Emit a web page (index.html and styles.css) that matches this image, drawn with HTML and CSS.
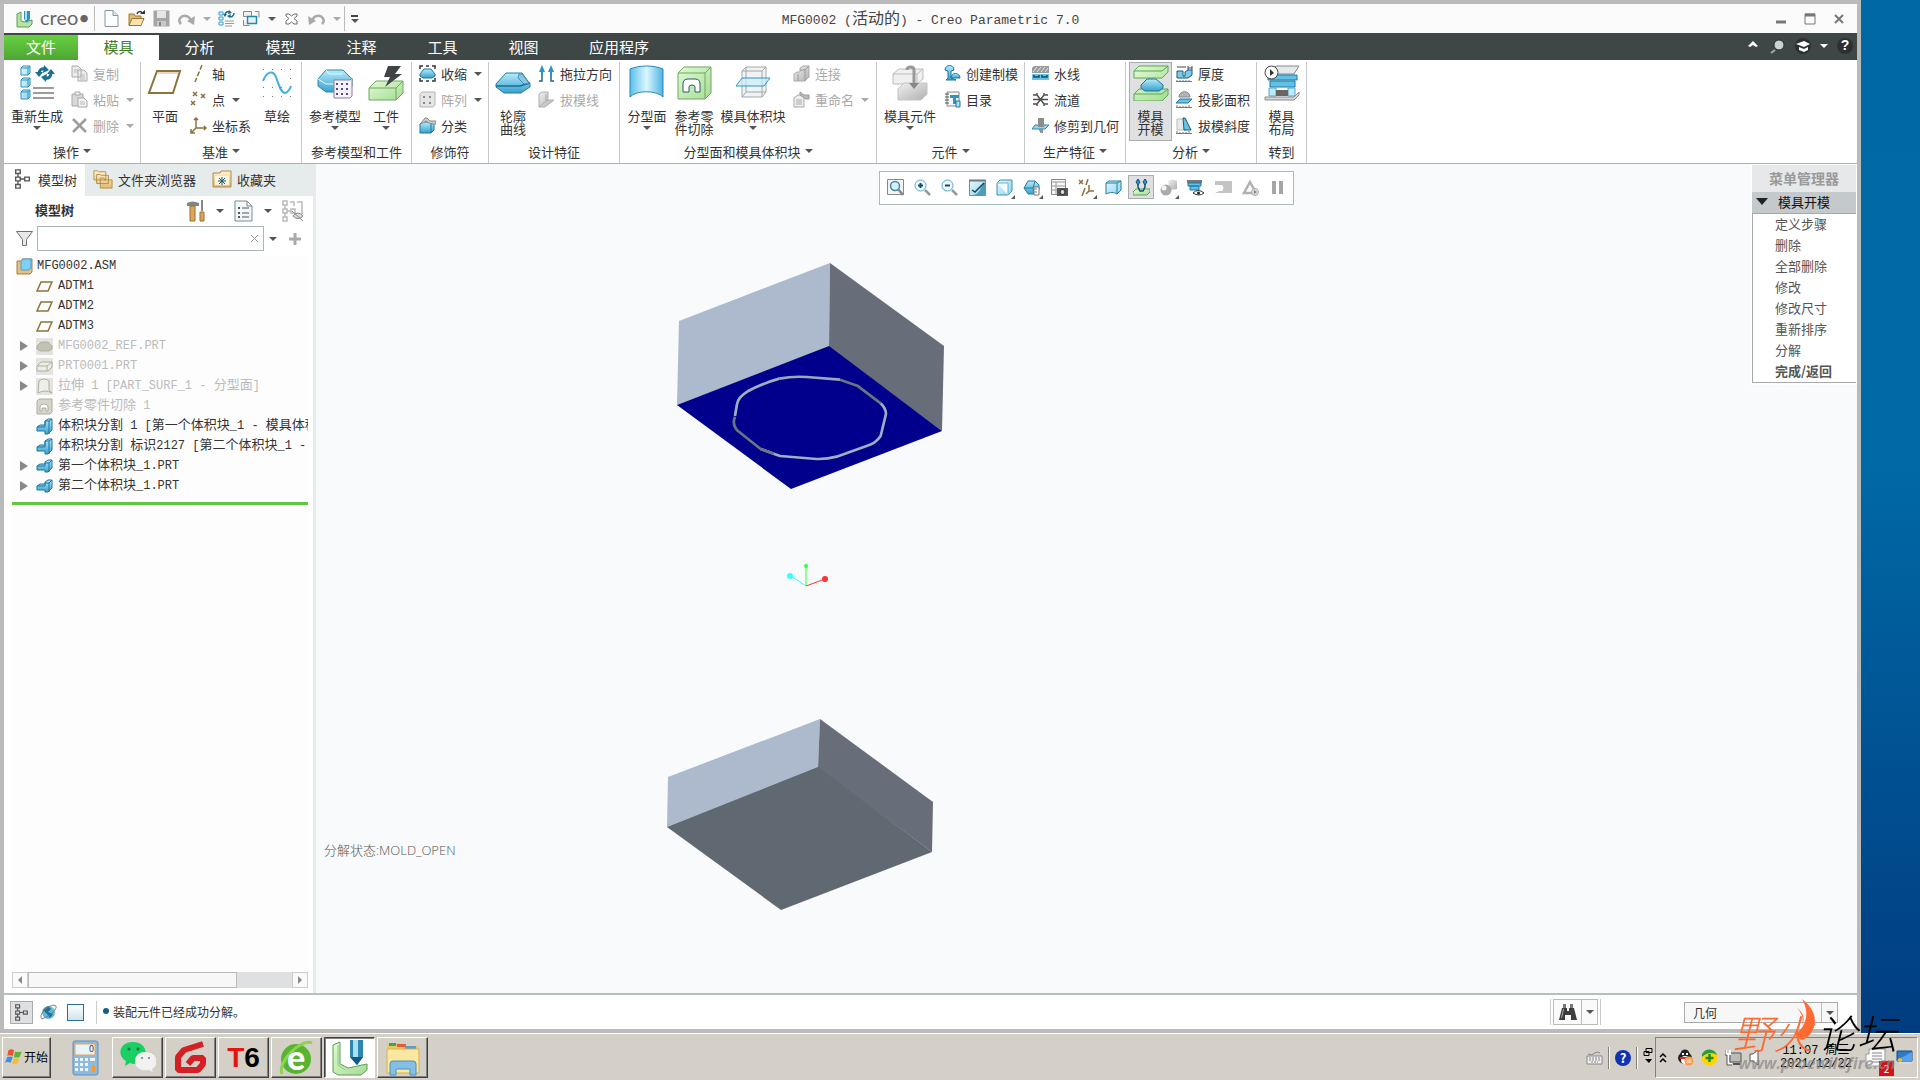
FILE: index.html
```
<!DOCTYPE html>
<html lang="zh-CN">
<head>
  <meta charset="UTF-8">
  <meta name="viewport" content="width=device-width, initial-scale=1.0">
  <title>MFG0002 (活动的) - Creo Parametric 7.0</title>
  <link rel="stylesheet" href="styles.css">
</head>
<body>
<!-- Icon sprite -->
<svg class="sprite" aria-hidden="true">
  <defs>
    <linearGradient id="gBlue" x1="0" y1="0" x2="0" y2="1"><stop offset="0" stop-color="#b4ecfb"/><stop offset="1" stop-color="#3aa0cc"/></linearGradient>
    <linearGradient id="gPale" x1="0" y1="0" x2="1" y2="1"><stop offset="0" stop-color="#e4f8ff"/><stop offset="1" stop-color="#8fd3ee"/></linearGradient>
    <linearGradient id="gSurf" x1="0" y1="0" x2="1" y2="0"><stop offset="0" stop-color="#5bbfea"/><stop offset=".5" stop-color="#dcf6ff"/><stop offset="1" stop-color="#4db4e4"/></linearGradient>
    <linearGradient id="gGreen" x1="0" y1="0" x2="1" y2="1"><stop offset="0" stop-color="#e0fbd4"/><stop offset="1" stop-color="#a6dc94"/></linearGradient>
    <linearGradient id="gGray" x1="0" y1="0" x2="1" y2="1"><stop offset="0" stop-color="#f0f0f0"/><stop offset="1" stop-color="#b0b0b0"/></linearGradient>
    <linearGradient id="gFold" x1="0" y1="0" x2="0" y2="1"><stop offset="0" stop-color="#fff3cf"/><stop offset="1" stop-color="#e3bb76"/></linearGradient>
  </defs>

  <!-- quick access -->
  <symbol id="i-logo" viewBox="0 0 18 18"><path d="M1 4l4-2v9l3 1 8-2v4l-3 3H1z" fill="#b9e2a4" stroke="#5f9d55"/><path d="M8 1h6v8l-3 4-3-4z" fill="#2f93c2"/><path d="M9 1h2v9H9z" fill="#a5e1f7"/></symbol>
  <symbol id="i-new" viewBox="0 0 17 17"><path d="M2 .5h8l5 5v11H2z" fill="#fdfeff" stroke="#8a969e"/><path d="M10 .5v5h5" fill="#d4e4ee" stroke="#8a969e"/></symbol>
  <symbol id="i-open" viewBox="0 0 17 17"><path d="M1 15V4h5l1 2h6v3" fill="#e8b968" stroke="#99743a"/><path d="M1 15.500l3-7h12l-3 7z" fill="#fbe3ac" stroke="#99743a"/><path d="M9 4c1-3 4-3 5-1" fill="none" stroke="#333" stroke-width="1.500"/><path d="M12 4h5V0z" fill="#333"/></symbol>
  <symbol id="i-save" viewBox="0 0 17 17"><path d="M.5.500h16v16H.5z" fill="#a5a5a5"/><path d="M4 1h9v7H4z" fill="#e6e6e6"/><path d="M4 11h9v5H4z" fill="#c9c9c9"/><path d="M6 12h2v4H6z" fill="#888"/></symbol>
  <symbol id="i-redo" viewBox="0 0 17 17"><path d="M3 14c-4-4 0-9 5-8 3 0 4 3 5 4" fill="none" stroke="#a9a9a9" stroke-width="2.500"/><path d="M17 6l-1 9-7-4z" fill="#a9a9a9"/></symbol>
  <symbol id="i-undo" viewBox="0 0 17 17"><path d="M14 14c4-4 0-9-5-8-3 0-4 3-5 4" fill="none" stroke="#a9a9a9" stroke-width="2.500"/><path d="M0 6l1 9 7-4z" fill="#a9a9a9"/></symbol>
  <symbol id="i-regen" viewBox="0 0 17 17"><path d="M1 2h4v3H1zM1 7h4v3H1zM1 12h4v3H1z" fill="#dff5ff" stroke="#3c9dc9"/><path d="M7 5c0-3 3-4 5-3M16 3c0 3-3 5-5 3" fill="none" stroke="#176d90" stroke-width="1.500"/><path d="M11 0l3 3-4 1zM12 8L9 6l4-2zM5 4h4L7 7z" fill="#176d90"/><path d="M7 11h9M7 13.500h9M7 16h7" stroke="#9a9a9a"/></symbol>
  <symbol id="i-wins" viewBox="0 0 17 17"><path d="M.5 1.500h8v5h-8zM12 1.500h4v6M.5 10v5.500h6" fill="#eee" stroke="#8c8c8c"/><path d="M4.500 6.500h9v7h-9z" fill="#dff3fb" stroke="#2a86a8" stroke-width="1.500"/></symbol>
  <symbol id="i-closewin" viewBox="0 0 17 17"><path d="M3 4h3l2.500 2L11 4h3v2l-3 2.500 3 2.500v3h-3l-2.500-2L6 14H3v-3l3-2.500L3 6z" fill="#fff" stroke="#6d6d6d"/></symbol>

  <!-- ribbon large -->
  <symbol id="b-regen" viewBox="0 0 36 36"><g fill="url(#gPale)" stroke="#2d93c0"><path d="M2 3l2-2h7v7l-2 2H2zM2 15l2-2h7v7l-2 2H2zM2 27l2-2h7v7l-2 2H2z"/><path d="M2 3h7v7M9 3l2-2M2 15h7v7M9 15l2-2M2 27h7v7M9 27l2-2" fill="none"/></g><path d="M20 8q1-5 6-4M32 9q-1 5-6 4" fill="none" stroke="#1a6f94" stroke-width="3"/><path d="M25 0l5 5-6 3zM27 17l-5-5 6-3zM16 7h8l-4 5zM28 9h8l-4-5z" fill="#1a6f94"/><path d="M14 23h21M14 28h21M14 33h21" stroke="#9c9c9c" stroke-width="2"/></symbol>
  <symbol id="b-plane" viewBox="0 0 36 36"><path d="M10 6h23l-7 22H2z" fill="none" stroke="#8e713c" stroke-width="2"/><path d="M11 8h20" stroke="#c9b284"/></symbol>
  <symbol id="b-sketch" viewBox="0 0 36 36"><g fill="#777"><path d="M4 4h1v1H4zM13 4h1v1h-1zM22 4h1v1h-1zM31 4h1v1h-1zM4 13h1v1H4zM31 13h1v1h-1zM4 22h1v1H4zM13 22h1v1h-1zM22 22h1v1h-1zM31 22h1v1h-1zM4 31h1v1H4zM13 31h1v1h-1zM22 31h1v1h-1zM31 31h1v1h-1z"/></g><path d="M4 16C8 6 14 5 17 12c3 8 5 16 9 16 4-1 5-4 6-7" fill="none" stroke="#43aee0" stroke-width="2"/></symbol>
  <symbol id="b-refmodel" viewBox="0 0 36 36"><path d="M1 14L9 5h17l9 9v7l-5 6H9l-8-6z" fill="url(#gBlue)" stroke="#2988b0"/><path d="M1 14l8 5h18l8-5M9 5l3 4h14" fill="none" stroke="#e3faff"/><path d="M17 15h16l2-2v18l-2 2H17z" fill="#f5f2fa" stroke="#87809d"/><g fill="#5a4a86"><path d="M19 18h2v2h-2zM24 18h2v2h-2zM29 18h2v2h-2zM19 23h2v2h-2zM24 23h2v2h-2zM29 23h2v2h-2zM19 28h2v2h-2zM24 28h2v2h-2zM29 28h2v2h-2z"/></g></symbol>
  <symbol id="b-work" viewBox="0 0 36 36"><path d="M1 23l7-7h27v12l-7 7H1z" fill="url(#gGreen)" stroke="#6ea860"/><path d="M1 23h27v12M28 23l7-7" fill="none" stroke="#6ea860"/><path d="M20 1h13l-6 8h7L17 22l5-10h-6z" fill="#404448"/></symbol>
  <symbol id="b-lens" viewBox="0 0 36 36"><path d="M1 19L11 8h16l8 11v3l-9 6H9l-8-6z" fill="url(#gBlue)" stroke="#247da6"/><path d="M1 21h24l10-3" fill="none" stroke="#176d96" stroke-width="1.500"/><path d="M24 9h3l7 9-5 1-6-6z" fill="#8cc6e0" stroke="#3f93b8"/></symbol>
  <symbol id="b-surf" viewBox="0 0 36 36"><path d="M1 4c9-4 24-4 33 0v28c-6-7-27-7-33 0z" fill="url(#gSurf)" stroke="#2d86b4"/></symbol>
  <symbol id="b-refcut" viewBox="0 0 36 36"><path d="M2 8l6-6h27v26l-6 6H2z" fill="url(#gGreen)" stroke="#6ea860"/><path d="M2 8h27v26M29 8l6-6" fill="none" stroke="#6ea860"/><path d="M7 27v-8q0-5 5-5h7q5 0 5 5v8h-5v-5q0-2-3-2t-3 2v5z" fill="#fff" stroke="#285a72"/></symbol>
  <symbol id="b-volume" viewBox="0 0 36 36"><path d="M7 6l4-4h20v25l-4 5H7z" fill="#f1f2f3" stroke="#a3a8ac"/><path d="M7 6h20v26M27 6l4-4M11 2v25h20M7 32l4-5" fill="none" stroke="#a3a8ac"/><path d="M7 13h28l-6 8H1z" fill="#c7ecfa" fill-opacity=".6" stroke="#2e92c4"/></symbol>
  <symbol id="b-moldcomp" viewBox="0 0 36 36"><path d="M1 9l6-5h24v10l-6 5H1zM1 9h24v10M25 9l6-5" fill="#f0f0f0" stroke="#bbb"/><path d="M6 24l6-6h23v11l-6 6H6z" fill="url(#gGray)" stroke="#c5c5c5"/><path d="M15 5c0-4 7-4 7 0v14" fill="none" stroke="#999" stroke-width="3"/><path d="M17 18h10l-5 6z" fill="#888"/></symbol>
  <symbol id="b-open" viewBox="0 0 36 36"><g fill="url(#gGreen)" stroke="#5da653"><path d="M1 6l5-5h29v6l-6 6H1zM1 29l5-5h29v6l-6 6H1z"/><path d="M1 6h28l6-5M1 29h28l6-5" fill="none"/></g><path d="M8 20l6-6h9l7 6v3l-4 3H12l-4-3z" fill="url(#gBlue)" stroke="#1c76a3"/></symbol>
  <symbol id="b-layout" viewBox="0 0 36 36"><path d="M8 5l4-4h23l-5 8H8z" fill="#e6e8ea" stroke="#85898c"/><path d="M4 10h29v5H4zM6 16h25v6H6z" fill="#5fc2e6" stroke="#1d7ba6"/><path d="M5 23h7v8H5zM24 23h7v8h-7z" fill="#bdeafa" stroke="#58a6c6"/><path d="M12 25h12v6H12z" fill="#666"/><path d="M1 32h29l5-5v3l-5 5H1z" fill="#d4d6d8" stroke="#8b8f92"/><circle cx="7.500" cy="7.500" r="6.500" fill="#fff" stroke="#444"/><path d="M6 4v7l4-3z" fill="#333"/></symbol>

  <!-- ribbon small -->
  <symbol id="s-copy" viewBox="0 0 17 17"><path d="M1 1h6l3 3v8H1zM7 5h6l3 3v8H7z" fill="#ececec" stroke="#aaa"/><path d="M3 5h4M3 7h4M9 10h5M9 12h5M9 14h5" stroke="#bbb"/></symbol>
  <symbol id="s-paste" viewBox="0 0 17 17"><path d="M1 3h11v12H1z" fill="#d8d8d8" stroke="#aaa"/><path d="M4 1h5v3H4z" fill="#eee" stroke="#aaa"/><path d="M7 7h6l3 3v6H7z" fill="#f2f2f2" stroke="#aaa"/><path d="M9 11h5M9 13h5" stroke="#bbb"/></symbol>
  <symbol id="s-del" viewBox="0 0 17 17"><path d="M2 2l13 13M15 2L2 15" stroke="#9c9c9c" stroke-width="2.500"/></symbol>
  <symbol id="s-axis" viewBox="0 0 17 17"><path d="M12 0L5 17" stroke="#8e713c" stroke-width="1.500" stroke-dasharray="5 2"/></symbol>
  <symbol id="s-point" viewBox="0 0 17 17"><path d="M3 1l4 4m0-4L3 5M11 3l4 4m0-4l-4 4M1 10l4 4m0-4l-4 4" stroke="#8e713c" stroke-width="1.500"/></symbol>
  <symbol id="s-csys" viewBox="0 0 17 17"><path d="M6 1v10h10M6 11l-5 5M4 3l2-2 2 2M14 9l2 2-2 2M1 12v4h4" fill="none" stroke="#8e713c" stroke-width="1.500"/></symbol>
  <symbol id="s-shrink" viewBox="0 0 17 17"><path d="M1 9l4-5h7l4 5v2l-3 2H4l-3-2z" fill="url(#gBlue)" stroke="#1c76a3"/><path d="M1 4V1h3M13 1h3v3M1 13v3h3M16 13v3h-3M7 1h3M7 16h3" fill="none" stroke="#333" stroke-width="1.500"/></symbol>
  <symbol id="s-pattern" viewBox="0 0 17 17"><path d="M1 3l2-2h13v13l-2 2H1z" fill="#e5e5e5" stroke="#b5b5b5"/><path d="M4 5h2v2H4zM10 5h2v2h-2zM4 11h2v2H4zM10 11h2v2h-2z" fill="#888"/></symbol>
  <symbol id="s-class" viewBox="0 0 17 17"><path d="M1 7l3-2h11v8l-3 3H1z" fill="url(#gBlue)" stroke="#1c76a3"/><path d="M12 7v9M12 7l3-2" stroke="#1c76a3"/><path d="M2 6l4-5h2l3 3h6v3h-3l-4-1-3-2-3 2z" fill="#ccc" stroke="#8c8c8c"/></symbol>
  <symbol id="s-pull" viewBox="0 0 17 17"><path d="M1 16h3V6M16 16h-3V6" fill="none" stroke="#23658a" stroke-width="1.500"/><path d="M1 7l3-7 3 7zM10 7l3-7 3 7z" fill="#2d93c8"/><path d="M3 6h2v5H3zM12 6h2v5h-2z" fill="#2d93c8"/></symbol>
  <symbol id="s-draft" viewBox="0 0 17 17"><path d="M1 3l3-2h6v8h6l-9 7H1z" fill="url(#gGray)" stroke="#b0b0b0"/><path d="M8 3v7l-7 6M10 9l-2 1" fill="none" stroke="#aaa"/></symbol>
  <symbol id="s-conn" viewBox="0 0 17 17"><path d="M1 9l3-2h3V3l3-2h6v11l-4 4H1z" fill="url(#gGray)" stroke="#aaa"/><path d="M7 5h5v11M12 5l4-4M5 9v7" fill="none" stroke="#999"/></symbol>
  <symbol id="s-rename" viewBox="0 0 17 17"><path d="M1 7l4-3h6v12H1z" fill="#eee" stroke="#aaa"/><path d="M3 9h6M3 11h6M3 13h6" stroke="#aaa"/><path d="M7 1l4 3h5v4h-3l-6-4z" fill="#bbb" stroke="#999"/></symbol>
  <symbol id="s-mold" viewBox="0 0 17 17"><path d="M1 5c0-6 9-6 9 0l-3 1v7l5 2H2l2-2V6z" fill="url(#gBlue)" stroke="#1c76a3"/><path d="M7 13c0-6 9-6 9 0z" fill="url(#gBlue)" stroke="#1c76a3"/></symbol>
  <symbol id="s-catalog" viewBox="0 0 17 17"><path d="M3 1h12v14H3z" fill="#f4f6f7" stroke="#888"/><path d="M1 3h4M1 6h4M1 9h4M1 12h4" stroke="#555"/><path d="M6 4h9v3h-3v6H9V7H6z" fill="#2d93c8"/><path d="M12 10h4v6h-4z" fill="#a8e0f5" stroke="#1c76a3"/></symbol>
  <symbol id="s-water" viewBox="0 0 17 17"><path d="M0 3l2-2h15v7H0z" fill="#9a9a9a"/><path d="M1 7l4-5M5 7l4-5M9 7l4-5M13 7l3-4" stroke="#e8e8e8"/><path d="M0 9h17v6H0z" fill="#69c1e4"/><path d="M2 10v2h5v-2M10 10v2h5v-2" fill="none" stroke="#0d4f6e" stroke-width="1.500"/></symbol>
  <symbol id="s-runner" viewBox="0 0 17 17"><path d="M1 4h4l7 9h4M1 13h4l7-9h4M5 2v2M12 2v2M5 15v-2M12 15v-2M1 8.500h15" fill="none" stroke="#505050" stroke-width="1.500"/></symbol>
  <symbol id="s-trim" viewBox="0 0 17 17"><path d="M3 8h14l-4 4H0z" fill="#8ed6f1" stroke="#2988b0"/><path d="M6 1h6v9H6z" fill="#8c8c8c"/><path d="M7 13h4M8 15h3" stroke="#777" stroke-width="1.500"/></symbol>
  <symbol id="s-thick" viewBox="0 0 17 17"><path d="M1 6h6v5h2V7l3-2h4v5l-4 3H1z" fill="#7fcbe9" stroke="#1a5c7c"/><path d="M12 1v4M16 1v4M12 3h4M1 2h9" fill="none" stroke="#444"/><path d="M0 16.500h16M1 15v1M4 15v1M7 15v1M10 15v1M13 15v1" stroke="#777"/></symbol>
  <symbol id="s-proj" viewBox="0 0 17 17"><path d="M3 6c0-7 11-7 11 0z" fill="#b5b5b5" stroke="#888"/><path d="M4 8h12l-4 4H0z" fill="#69c1e4" stroke="#1c76a3"/><path d="M0 16.500h16M1 14v2M4 15v1M7 15v1M10 15v1M13 14v2" stroke="#777"/></symbol>
  <symbol id="s-slope" viewBox="0 0 17 17"><path d="M1 2h9v11H1z" fill="#eaeaea" stroke="#bbb"/><path d="M7 1h2l6 12H8z" fill="#69c1e4" stroke="#1a5c7c"/><path d="M0 16.500h16M1 14v2M4 15v1M7 15v1M10 15v1M13 14v2" stroke="#777"/></symbol>

  <!-- graphics toolbar -->
  <symbol id="v-refit" viewBox="0 0 17 17"><path d="M.5.500h16v15H.5z" fill="#f4f4f4" stroke="#888"/><circle cx="8" cy="7" r="4.500" fill="#d3f0fb" stroke="#3c8aae" stroke-width="1.500"/><path d="M11 10l5 6" stroke="#888" stroke-width="2.500"/></symbol>
  <symbol id="v-zin" viewBox="0 0 17 17"><circle cx="6.500" cy="6.500" r="5.500" fill="#eefaff" stroke="#5aa6c6"/><path d="M6.500 4v5M4 6.500h5" stroke="#134f70" stroke-width="2"/><path d="M11 11l5 5" stroke="#999" stroke-width="2.500"/></symbol>
  <symbol id="v-zout" viewBox="0 0 17 17"><circle cx="6.500" cy="6.500" r="5.500" fill="#eefaff" stroke="#5aa6c6"/><path d="M4 6.500h5" stroke="#134f70" stroke-width="2"/><path d="M11 11l5 5" stroke="#999" stroke-width="2.500"/></symbol>
  <symbol id="v-repaint" viewBox="0 0 17 17"><path d="M.5 1.500h16v15H.5z" fill="url(#gPale)" stroke="#7b8b93"/><path d="M16 3v13H3c8 0 8-8 13-13z" fill="#4a9dbf"/><path d="M0 1.500h17" stroke="#777" stroke-width="2"/><path d="M3 11l3 2 9-9" fill="none" stroke="#14435c" stroke-width="1.500"/></symbol>
  <symbol id="v-shade" viewBox="0 0 17 17"><path d="M1 4l3-3h12v11l-4 4H1z" fill="url(#gPale)" stroke="#3f8fb2"/><path d="M1 4h11v12" fill="#f4fcff" stroke="#68b5d6"/></symbol>
  <symbol id="v-views" viewBox="0 0 17 17"><path d="M1 9l4-7h7l4 4v5l-5 4H5z" fill="url(#gBlue)" stroke="#247da6"/><path d="M1 9h9l2-7M10 9l1 6" fill="none" stroke="#247da6"/><path d="M11 8h5v8h-5z" fill="#fff" stroke="#777"/><path d="M12 10h2M12 13h2" stroke="#777"/></symbol>
  <symbol id="v-snap" viewBox="0 0 17 17"><path d="M.5.500h14v15H.5z" fill="#f7f7f7" stroke="#888"/><path d="M0 3h15M0 7h15M0 11h15M5 3v12" stroke="#999"/><path d="M6 9h11v8H6z" fill="#555"/><circle cx="11.500" cy="13" r="2.500" fill="#ddd" stroke="#222"/></symbol>
  <symbol id="v-datum" viewBox="0 0 17 17"><path d="M1 1l4 4m0-4L1 5M10 0L8 6M7 9l-3 8M11 6v6h5M11 12l-3 3" fill="none" stroke="#8e713c" stroke-width="1.500"/></symbol>
  <symbol id="v-anno" viewBox="0 0 17 17"><path d="M1 4l3-2h12v9l-4 4c-3-2-7-2-11 0z" fill="url(#gPale)" stroke="#247da6"/><path d="M1 4h11v11M12 4l4-2" fill="none" stroke="#247da6"/></symbol>
  <symbol id="v-explode" viewBox="0 0 17 17"><path d="M0 13l3-3h14v3l-3 3H0z" fill="url(#gGreen)" stroke="#5da653"/><path d="M5 5v3l2 4h3l2-4V5" fill="none" stroke="#134f70" stroke-width="1.500"/><path d="M5 0l2 3-2 3-2-3zM12 0l2 3-2 3-2-3z" fill="#2d93c8" stroke="#134f70"/></symbol>
  <symbol id="v-spin" viewBox="0 0 17 17"><path d="M8 2q4-3 9 0v8l-7 1z" fill="url(#gGray)"/><circle cx="6" cy="11" r="5.500" fill="#aaa"/><circle cx="4" cy="9" r="2.500" fill="#f5f5f5"/></symbol>
  <symbol id="v-perspective" viewBox="0 0 17 17"><path d="M0 1h15v3H0z" fill="#777"/><path d="M1 4h13v3H1zM3 7h9v4H3z" fill="#5fc2e6" stroke="#1d7ba6"/><path d="M6 14q5-5 11 0-5 4-11 0z" fill="#fff" stroke="#333"/><circle cx="11.500" cy="14" r="1.500" fill="#222"/></symbol>
  <symbol id="v-stop" viewBox="0 0 17 17"><path d="M0 2h17v12H0l4-2h3q3-3 0-6H0z" fill="#c4c4c4"/></symbol>
  <symbol id="v-tri" viewBox="0 0 17 17"><path d="M8 3l6 11H2z" fill="none" stroke="#b0b0b0" stroke-width="2.500"/><circle cx="13" cy="13" r="3.500" fill="#ddd" stroke="#aaa"/><path d="M12 11v4l3-2z" fill="#888"/></symbol>
  <symbol id="v-pause" viewBox="0 0 17 17"><path d="M3 2h4v13H3zM10 2h4v13h-4z" fill="#a5a5a5"/></symbol>

  <!-- model tree -->
  <symbol id="t-tree" viewBox="0 0 17 22"><path d="M1 1h5v4H1zM1 9h5v4H1zM1 17h5v4H1zM11 9h5v4h-5zM3.500 5v4M3.500 13v4M6 11h5" fill="none" stroke="#555" stroke-width="1.500"/></symbol>
  <symbol id="t-folders" viewBox="0 0 22 22"><g fill="url(#gFold)" stroke="#b38a45"><path d="M1 2h4l1 1h8v9H1zM4 6h4l1 1h8v9H4zM8 10h4l1 2h8v9H8z"/></g></symbol>
  <symbol id="t-fav" viewBox="0 0 20 20"><path d="M1 4h7l1-2h10v16H1z" fill="url(#gFold)" stroke="#b38a45"/><path d="M3 7h14v9H3z" fill="#fcf3dc"/><path d="M10 8v8M6 12h8M7 9l6 6M13 9l-6 6" stroke="#17597c"/></symbol>
  <symbol id="t-tools" viewBox="0 0 20 22"><path d="M1 3q5-3 12 0v3H1z" fill="#7f8487"/><path d="M4 6h5v15H4z" fill="#dca75c" stroke="#9c6f2f"/><path d="M15 0h2v11h-2z" fill="#888"/><path d="M14 12h4v9h-4z" fill="#dca75c" stroke="#9c6f2f"/></symbol>
  <symbol id="t-list" viewBox="0 0 20 22"><path d="M1 1h12l5 5v15H1z" fill="#f2f7fa" stroke="#7d8a91"/><path d="M13 1v5h5" fill="none" stroke="#7d8a91"/><path d="M8 8h7M8 13h7M8 17h7" stroke="#555"/><path d="M4 7h2v2H4zM4 12h2v2H4zM4 16h2v2H4z" fill="#555"/></symbol>
  <symbol id="t-hide" viewBox="0 0 22 22"><path d="M1 1h4v4H1zM1 9h4v4H1zM1 17h4v4H1zM9 9h4v4H9zM3 5v4M3 13v4M5 11h4M8 2h4v4M15 2h5v12" fill="none" stroke="#bbb" stroke-width="1.500"/><path d="M11 16q5-6 10 0-5 5-10 0zM10 11l11 10" fill="#ddd" stroke="#888"/></symbol>
  <symbol id="t-funnel" viewBox="0 0 17 17"><path d="M.5 1.500h16l-6 8v6h-4v-6z" fill="#e9e9e9" stroke="#707070"/></symbol>
  <symbol id="t-asm" viewBox="0 0 17 17"><path d="M1 3h5V1h10v13l-2 2H1z" fill="#e4c084" stroke="#a57d3e"/><path d="M5 3l2-2h8v9l-3 2H5z" fill="#7fd0f2" stroke="#4aa3c8"/></symbol>
  <symbol id="t-plane" viewBox="0 0 17 17"><path d="M5 4h11l-4 9H1z" fill="none" stroke="#8e713c" stroke-width="1.500"/></symbol>
  <symbol id="t-ref" viewBox="0 0 17 17"><path d="M0 0h17v17H0z" fill="#e3e3e1"/><path d="M1 8l4-4h7l4 4v3l-3 2H4l-3-2z" fill="#c2c1b2" stroke="#aeae9e"/></symbol>
  <symbol id="t-prt" viewBox="0 0 17 17"><path d="M0 0h17v17H0z" fill="#e3e3e1"/><path d="M1 8l4-4h11v5l-4 4H1zM1 8h10v5M11 8l5-4" fill="#eeeee6" stroke="#aeae9e"/></symbol>
  <symbol id="t-ext" viewBox="0 0 17 17"><path d="M0 0h17v17H0z" fill="#e3e3e1"/><path d="M3 3q5-4 10 0v9l3 3q-7-4-14 0z" fill="#eeeee6" stroke="#aeae9e"/></symbol>
  <symbol id="t-cut" viewBox="0 0 17 17"><path d="M1 3l2-2h13v13l-2 2H1z" fill="#d5d5ca" stroke="#aeae9e"/><path d="M4 13V9q0-3 4-3t4 3v4h-2v-3H6v3z" fill="#fff" stroke="#aeae9e"/></symbol>
  <symbol id="t-split" viewBox="0 0 17 17"><path d="M1 9l3-2h5V3l3-2h4v11l-4 4H9v-3H1z" fill="url(#gBlue)" stroke="#1c76a3"/><path d="M1 9h8V3h4v13M13 3l3-2" fill="none" stroke="#1c76a3"/></symbol>
  <symbol id="t-part" viewBox="0 0 17 17"><path d="M1 8l3-2h5V4l3-2h4v8l-4 4H9v-2H1z" fill="url(#gBlue)" stroke="#1c76a3"/><path d="M1 8h8V5h4v9M13 5l3-3" fill="none" stroke="#1c76a3"/></symbol>

  <!-- status bar -->
  <symbol id="f-globe" viewBox="0 0 17 17"><circle cx="8.500" cy="8.500" r="6.500" fill="#5fb9e0"/><path d="M3 6l5-4 3 3-3 3 5 2-3 4-3-4z" fill="#1c6f98"/><path d="M2 15C-3 10 12-2 16 2c1 3-4 9-14 13" fill="none" stroke="#777"/></symbol>
  <symbol id="f-find" viewBox="0 0 18 18"><path d="M4 1h3v4H4zM11 1h3v4h-3z" fill="#777"/><path d="M3 5h5v3h2V5h5l3 12h-6v-5H6v5H0z" fill="#3d3d3d"/><path d="M4 6h1L3 15H2z" fill="#aaa"/></symbol>
  <symbol id="f-flag" viewBox="0 0 16 16"><path d="M3 2q3-2 5 0L7 7Q4 6 2 7z" fill="#e8552c"/><path d="M9 3q3 1 6 0l-2 5q-3 1-5 0z" fill="#5bb531"/><path d="M2 8q3-1 5 0l-2 5q-3-1-5 0z" fill="#3d8fe0"/><path d="M8 9q2 1 5 0l-2 5q-3 1-5-1z" fill="#f7bc2b"/></symbol>

  <!-- taskbar -->
  <symbol id="k-calc" viewBox="0 0 36 36"><rect x="6" y="1" width="25" height="34" rx="2" fill="#8fb9dd" stroke="#5d8fbe"/><path d="M8 4h20v11H8z" fill="#e7f3fc" stroke="#f5a54b"/><g fill="#eef6fd"><path d="M8 18h3v3H8zM13 18h3v3h-3zM18 18h3v3h-3zM23 18h5v3h-5zM8 23h3v3H8zM13 23h3v3h-3zM18 23h3v3h-3zM8 28h3v3H8zM13 28h3v3h-3zM18 28h3v3h-3z"/></g><path d="M25 25h3v7h-3z" fill="#f39b2d"/></symbol>
  <symbol id="k-chat" viewBox="0 0 36 36"><path d="M13 2c17 0 17 22 0 22l-3-1-5 3 1-5C-4 15 0 2 13 2z" fill="#19cf64"/><circle cx="9" cy="9" r="1.500" fill="#14713c"/><circle cx="18" cy="9" r="1.500" fill="#14713c"/><path d="M25 12c14 0 14 14 7 17l1 3-4-2c-18 3-18-18-4-18z" fill="#f1f1f1"/><circle cx="22" cy="18" r="1" fill="#777"/><circle cx="29" cy="18" r="1" fill="#777"/></symbol>
  <symbol id="k-red" viewBox="0 0 36 36"><path d="M30 4L11 10 5 17v13h20l5-6v-6H20l-5 6" fill="none" stroke="#d41f24" stroke-width="6" stroke-linejoin="bevel"/></symbol>
  <symbol id="k-browser" viewBox="0 0 36 36"><circle cx="17" cy="19" r="15" fill="#56b430"/><path d="M3 34C-2 22 22-2 33 3" fill="none" stroke="#8ed34f" stroke-width="3"/></symbol>
  <symbol id="k-creo" viewBox="0 0 36 36"><path d="M1 5l7-3v22l8 4 19-4v6l-6 5H6l-5-3z" fill="url(#gGreen)" stroke="#5d9c55"/><path d="M6 5v20l7 5" fill="none" stroke="#8dc97e"/><path d="M18 0h13v17l-6 8-7-8z" fill="#2f86b0"/><path d="M21 0h5v19h-5z" fill="#a8e0f5"/><path d="M18 17h13l-6 8z" fill="#135a80"/></symbol>
  <symbol id="k-explorer" viewBox="0 0 36 36"><path d="M2 3h13l2 3h16v26H2z" fill="#e9c763"/><path d="M4 3h7v3H4z" fill="#41a05a"/><path d="M12 4h9v3h-9z" fill="#e05a3c"/><path d="M20 6h11v3H20z" fill="#5a9bd0"/><path d="M2 9h32v24H2z" fill="#fae7a0" stroke="#d9b14f"/><path d="M5 35V24q0-3 3-3h20q3 0 3 3v11h-6v-6H11v6z" fill="#86bfe6" stroke="#4b90c2"/></symbol>
  <symbol id="k-kbd" viewBox="0 0 17 17"><path d="M1 7h15v8H1z" fill="#eee" stroke="#888"/><path d="M3 9h11M3 11h11M5 13h7" stroke="#888" stroke-dasharray="2 1"/><path d="M2 5q4 2 7-1 3-2 5 0" fill="none" stroke="#888"/></symbol>
  <symbol id="k-restore" viewBox="0 0 10 17"><path d="M3 1.500h6v4H3zM1 4.500h5v4H1z" fill="#d4d0c8" stroke="#000"/><path d="M2 12h7l-3 4z"/></symbol>
  <symbol id="k-qq" viewBox="0 0 17 17"><ellipse cx="8" cy="9" rx="7" ry="6" fill="#222"/><circle cx="8" cy="5" r="4.500" fill="#222"/><ellipse cx="8" cy="11" rx="4" ry="4" fill="#fff"/><path d="M5 4h2v2H5zM9 4h2v2H9z" fill="#fff"/><path d="M3 8h10v2H3z" fill="#e02a20"/><circle cx="12" cy="12" r="4.500" fill="#ff9743"/><path d="M9.500 11h5M9.500 13h5" stroke="#fff"/></symbol>
  <symbol id="k-360" viewBox="0 0 17 17"><circle cx="8.500" cy="8.500" r="8" fill="#ffd500"/><path d="M1 5C5-2 14 0 16 6 12 3 6 3 1 8z" fill="#2c9b3c"/><path d="M8.500 5v8M4.500 9h8" stroke="#1d8a30" stroke-width="2.500"/></symbol>
  <symbol id="k-net" viewBox="0 0 17 17"><path d="M5 4h11v9H5z" fill="#b9bcb8" stroke="#555"/><path d="M8 15h7" stroke="#555" stroke-width="2"/><path d="M1 1v4h4V1M3 5v10h4" fill="none" stroke="#fff" stroke-width="2"/><path d="M0 1v5h2v10h5" fill="none" stroke="#555"/></symbol>
  <symbol id="k-vol" viewBox="0 0 12 17"><path d="M1 5h3l5-4v15l-5-4H1z" fill="#fff" stroke="#555"/></symbol>
  <symbol id="k-note" viewBox="0 0 22 20"><path d="M4 1h16v17H1V6h3z" fill="#fafafa" stroke="#999"/><path d="M7 5h10M7 8h10M7 11h10M7 14h10" stroke="#888"/></symbol>
  <symbol id="k-desk" viewBox="0 0 17 17"><path d="M1 2h15v10H1z" fill="#2f79c9" stroke="#134a8a"/><path d="M1 11l15-8v9H1z" fill="#5ba0e6"/><path d="M3 14h12" stroke="#d8d8d8" stroke-width="2"/><circle cx="4" cy="11" r="2" fill="#f5bd2c"/></symbol>
</svg>

<div class="desktop">
  <div class="window">

    <!-- Title bar -->
    <header class="titlebar">
      <div class="quick">
        <svg class="ico logo"><use href="#i-logo"/></svg>
        <span class="brand">creo•</span>
        <span class="sep"></span>
        <button aria-label="新建"><svg class="ico"><use href="#i-new"/></svg></button>
        <button aria-label="打开"><svg class="ico"><use href="#i-open"/></svg></button>
        <button aria-label="保存"><svg class="ico"><use href="#i-save"/></svg></button>
        <button aria-label="重做"><svg class="ico"><use href="#i-redo"/></svg></button>
        <i class="caret dim"></i>
        <button aria-label="重新生成"><svg class="ico"><use href="#i-regen"/></svg></button>
        <button aria-label="窗口"><svg class="ico"><use href="#i-wins"/></svg></button>
        <i class="caret"></i>
        <button aria-label="关闭"><svg class="ico"><use href="#i-closewin"/></svg></button>
        <button aria-label="撤消"><svg class="ico"><use href="#i-undo"/></svg></button>
        <i class="caret dim"></i>
        <span class="sep"></span>
        <button class="customize" aria-label="自定义"><i class="caret"></i></button>
      </div>
      <h1><span class="lat">MFG0002 (</span>活动的<span class="lat">) - Creo Parametric 7.0</span></h1>
      <div class="winbtns">
        <button aria-label="最小化"><svg viewBox="0 0 12 12"><path d="M1 9h10" stroke="#777" stroke-width="3"/></svg></button>
        <button aria-label="最大化"><svg viewBox="0 0 12 12"><path d="M1 1h10v10H1z" fill="none" stroke="#777"/><path d="M1 2h10" stroke="#777" stroke-width="3"/></svg></button>
        <button aria-label="关闭窗口"><svg viewBox="0 0 12 12"><path d="M2 2l8 8M10 2l-8 8" stroke="#777" stroke-width="2"/></svg></button>
      </div>
    </header>

    <!-- Ribbon tabs -->
    <nav class="tabs">
      <button class="tab file">文件</button>
      <button class="tab active">模具</button>
      <button class="tab">分析</button>
      <button class="tab">模型</button>
      <button class="tab">注释</button>
      <button class="tab">工具</button>
      <button class="tab">视图</button>
      <button class="tab">应用程序</button>
      <div class="tab-tools">
        <button aria-label="最小化功能区"><svg viewBox="0 0 16 16"><path d="M3 8l5-5 5 5-2 1-3-2-3 2z" fill="#fff"/></svg></button>
        <button aria-label="搜索"><svg viewBox="0 0 16 16"><circle cx="9" cy="7" r="5" fill="#c9d3d3" stroke="#2b2f30"/><path d="M5 12l-4 3" stroke="#aaa" stroke-width="2"/></svg></button>
        <button aria-label="学习"><svg viewBox="0 0 16 16"><circle cx="8" cy="8" r="8" fill="#2c3031"/><path d="M1 6l8-3 6 3-6 3zM4 9l5 2 4-2v3l-4 2-5-2z" fill="#fff"/></svg></button>
        <i class="caret white"></i>
        <button aria-label="帮助" class="help">?</button>
      </div>
    </nav>

    <!-- Ribbon -->
    <div class="ribbon">
      <section class="group g-ops">
        <div class="tools">
          <button class="big"><svg><use href="#b-regen"/></svg>重新生成<i class="caret"></i></button>
          <div class="col">
            <button class="small" disabled><svg class="ico"><use href="#s-copy"/></svg>复制</button>
            <button class="small" disabled><svg class="ico"><use href="#s-paste"/></svg>粘贴<i class="caret dim"></i></button>
            <button class="small" disabled><svg class="ico"><use href="#s-del"/></svg>删除<i class="caret dim"></i></button>
          </div>
        </div>
        <h2>操作<i class="caret"></i></h2>
      </section>
      <section class="group g-datum">
        <div class="tools">
          <button class="big"><svg><use href="#b-plane"/></svg>平面</button>
          <div class="col">
            <button class="small"><svg class="ico"><use href="#s-axis"/></svg>轴</button>
            <button class="small"><svg class="ico"><use href="#s-point"/></svg>点<i class="caret"></i></button>
            <button class="small"><svg class="ico"><use href="#s-csys"/></svg>坐标系</button>
          </div>
          <button class="big"><svg><use href="#b-sketch"/></svg>草绘</button>
        </div>
        <h2>基准<i class="caret"></i></h2>
      </section>
      <section class="group g-ref">
        <div class="tools">
          <button class="big"><svg><use href="#b-refmodel"/></svg>参考模型<i class="caret"></i></button>
          <button class="big"><svg><use href="#b-work"/></svg>工件<i class="caret"></i></button>
        </div>
        <h2>参考模型和工件</h2>
      </section>
      <section class="group g-mod">
        <div class="tools">
          <div class="col">
            <button class="small"><svg class="ico"><use href="#s-shrink"/></svg>收缩<i class="caret"></i></button>
            <button class="small" disabled><svg class="ico"><use href="#s-pattern"/></svg>阵列<i class="caret"></i></button>
            <button class="small"><svg class="ico"><use href="#s-class"/></svg>分类</button>
          </div>
        </div>
        <h2>修饰符</h2>
      </section>
      <section class="group g-design">
        <div class="tools">
          <button class="big"><svg><use href="#b-lens"/></svg>轮廓<br>曲线</button>
          <div class="col">
            <button class="small"><svg class="ico"><use href="#s-pull"/></svg>拖拉方向</button>
            <button class="small" disabled><svg class="ico"><use href="#s-draft"/></svg>拔模线</button>
          </div>
        </div>
        <h2>设计特征</h2>
      </section>
      <section class="group g-part">
        <div class="tools">
          <button class="big"><svg><use href="#b-surf"/></svg>分型面<i class="caret"></i></button>
          <button class="big"><svg><use href="#b-refcut"/></svg>参考零<br>件切除</button>
          <button class="big"><svg><use href="#b-volume"/></svg>模具体积块<i class="caret"></i></button>
          <div class="col">
            <button class="small" disabled><svg class="ico"><use href="#s-conn"/></svg>连接</button>
            <button class="small" disabled><svg class="ico"><use href="#s-rename"/></svg>重命名<i class="caret dim"></i></button>
          </div>
        </div>
        <h2>分型面和模具体积块<i class="caret"></i></h2>
      </section>
      <section class="group g-comp">
        <div class="tools">
          <button class="big"><svg><use href="#b-moldcomp"/></svg>模具元件<i class="caret"></i></button>
          <div class="col">
            <button class="small"><svg class="ico"><use href="#s-mold"/></svg>创建制模</button>
            <button class="small"><svg class="ico"><use href="#s-catalog"/></svg>目录</button>
          </div>
        </div>
        <h2>元件<i class="caret"></i></h2>
      </section>
      <section class="group g-prod">
        <div class="tools">
          <div class="col">
            <button class="small"><svg class="ico"><use href="#s-water"/></svg>水线</button>
            <button class="small"><svg class="ico"><use href="#s-runner"/></svg>流道</button>
            <button class="small"><svg class="ico"><use href="#s-trim"/></svg>修剪到几何</button>
          </div>
        </div>
        <h2>生产特征<i class="caret"></i></h2>
      </section>
      <section class="group g-analysis">
        <div class="tools">
          <button class="big pressed"><svg><use href="#b-open"/></svg>模具<br>开模</button>
          <div class="col">
            <button class="small"><svg class="ico"><use href="#s-thick"/></svg>厚度</button>
            <button class="small"><svg class="ico"><use href="#s-proj"/></svg>投影面积</button>
            <button class="small"><svg class="ico"><use href="#s-slope"/></svg>拔模斜度</button>
          </div>
        </div>
        <h2>分析<i class="caret"></i></h2>
      </section>
      <section class="group g-goto">
        <div class="tools">
          <button class="big"><svg><use href="#b-layout"/></svg>模具<br>布局</button>
        </div>
        <h2>转到</h2>
      </section>
    </div>

    <main class="work">
      <!-- Model tree -->
      <aside class="panel">
        <div class="panel-tabs">
          <button class="ptab active"><svg class="t-tree"><use href="#t-tree"/></svg>模型树</button>
          <button class="ptab"><svg><use href="#t-folders"/></svg>文件夹浏览器</button>
          <button class="ptab"><svg><use href="#t-fav"/></svg>收藏夹</button>
        </div>
        <div class="panel-head">
          <h3>模型树</h3>
          <button aria-label="设置"><svg><use href="#t-tools"/></svg></button><i class="caret"></i>
          <button aria-label="显示"><svg><use href="#t-list"/></svg></button><i class="caret"></i>
          <button aria-label="隐藏"><svg class="wide"><use href="#t-hide"/></svg></button>
        </div>
        <div class="filter">
          <label for="tree-filter" aria-label="过滤器"><svg class="ico"><use href="#t-funnel"/></svg></label>
          <div class="filter-box">
            <input id="tree-filter" type="text">
            <button aria-label="清除"><svg viewBox="0 0 9 9"><path d="M1 1l7 7M8 1L1 8" stroke="#999"/></svg></button>
          </div>
          <i class="caret"></i>
          <button class="plus" aria-label="添加"><svg viewBox="0 0 12 12"><path d="M6 0v12M0 6h12" stroke="#aaa" stroke-width="3"/></svg></button>
        </div>
        <ul class="tree">
          <li class="root"><svg class="ico"><use href="#t-asm"/></svg><span class="name"><span class="lat">MFG0002.ASM</span></span></li>
          <li><svg class="ico"><use href="#t-plane"/></svg><span class="name"><span class="lat">ADTM1</span></span></li>
          <li><svg class="ico"><use href="#t-plane"/></svg><span class="name"><span class="lat">ADTM2</span></span></li>
          <li><svg class="ico"><use href="#t-plane"/></svg><span class="name"><span class="lat">ADTM3</span></span></li>
          <li class="node off"><svg class="ico"><use href="#t-ref"/></svg><span class="name"><span class="lat">MFG0002_REF.PRT</span></span></li>
          <li class="node off"><svg class="ico"><use href="#t-prt"/></svg><span class="name"><span class="lat">PRT0001.PRT</span></span></li>
          <li class="node off"><svg class="ico"><use href="#t-ext"/></svg><span class="name">拉伸<span class="lat"> 1 [PART_SURF_1 - </span>分型面<span class="lat">]</span></span></li>
          <li class="off"><svg class="ico"><use href="#t-cut"/></svg><span class="name">参考零件切除<span class="lat"> 1</span></span></li>
          <li><svg class="ico"><use href="#t-split"/></svg><span class="name">体积块分割<span class="lat"> 1 [</span>第一个体积块<span class="lat">_1 - </span>模具体积</span></li>
          <li><svg class="ico"><use href="#t-split"/></svg><span class="name">体积块分割<span class="lat"> </span>标识<span class="lat">2127 [</span>第二个体积块<span class="lat">_1 -</span></span></li>
          <li class="node"><svg class="ico"><use href="#t-part"/></svg><span class="name">第一个体积块<span class="lat">_1.PRT</span></span></li>
          <li class="node"><svg class="ico"><use href="#t-part"/></svg><span class="name">第二个体积块<span class="lat">_1.PRT</span></span></li>
          <li class="insert-line"></li>
        </ul>
        <div class="hscroll">
          <button aria-label="向左"><i class="arrow left"></i></button>
          <div class="track"><div class="thumb"></div></div>
          <button aria-label="向右"><i class="arrow right"></i></button>
        </div>
      </aside>

      <!-- Graphics area -->
      <section class="viewport">
        <svg class="scene" viewBox="316 164 1541 829" preserveAspectRatio="xMinYMin meet">
          <!-- upper mold half -->
          <path d="M679 321L830 263 829 347 677 405z" fill="#adbacd"/>
          <path d="M830 263L944 346 942 431 829 347z" fill="#676e79"/>
          <path d="M677 405L829 346 942 431 791 489z" fill="#00008c"/>
          <!-- cavity ring -->
          <g transform="translate(640 240) scale(.3333)" fill="none" stroke-width="8" stroke-linejoin="round">
            <path d="M418 416q-50 14-93 37-32 20-34 40l-6 35M722 490q16 16 16 32l-16 66q-14 20-34 27l-98 35q-30 8-60 7l-110-9-58-21" stroke="#9db0c0"/>
            <path d="M285 530q-10 25 9 43l68 54 40 14M722 490l-70-53-52-18" stroke="#6b7580"/>
            <path d="M418 416q40-8 82-5l100 8" stroke="#9aa9ba"/>
          </g>
          <!-- lower mold half -->
          <path d="M668 777L820 719 818 768 667 827z" fill="#adbacd"/>
          <path d="M820 719L933 802 932 852 818 768z" fill="#676e79"/>
          <path d="M667 827L818 767 932 852 781 910z" fill="#606871"/>
          <!-- spin center -->
          <path d="M806 586v-20" stroke="#3f3"/>
          <path d="M806 586l19-7" stroke="#f33"/>
          <path d="M806 586l-15-10" stroke="#3ff"/>
          <circle cx="806" cy="566" r="2" fill="#3f3"/>
          <circle cx="825" cy="579" r="3" fill="#f33"/>
          <circle cx="790" cy="576" r="3" fill="#3ff"/>
          <text class="state" x="324" y="855">分解状态:MOLD_OPEN</text>
        </svg>
        <div class="viewbar">
          <button aria-label="重新调整"><svg class="ico"><use href="#v-refit"/></svg></button>
          <button aria-label="放大"><svg class="ico"><use href="#v-zin"/></svg></button>
          <button aria-label="缩小"><svg class="ico"><use href="#v-zout"/></svg></button>
          <button aria-label="重画"><svg class="ico"><use href="#v-repaint"/></svg></button>
          <button aria-label="显示样式" class="more"><svg class="ico"><use href="#v-shade"/></svg></button>
          <button aria-label="已保存方向" class="more"><svg class="ico"><use href="#v-views"/></svg></button>
          <button aria-label="视图管理器"><svg class="ico"><use href="#v-snap"/></svg></button>
          <button aria-label="基准显示" class="more"><svg class="ico"><use href="#v-datum"/></svg></button>
          <button aria-label="注释显示"><svg class="ico"><use href="#v-anno"/></svg></button>
          <button aria-label="分解视图" class="on"><svg class="ico"><use href="#v-explode"/></svg></button>
          <button aria-label="外观" class="more"><svg class="ico"><use href="#v-spin"/></svg></button>
          <button aria-label="模具显示"><svg class="ico"><use href="#v-perspective"/></svg></button>
          <button aria-label="停止" disabled><svg class="ico"><use href="#v-stop"/></svg></button>
          <button aria-label="模拟" disabled><svg class="ico"><use href="#v-tri"/></svg></button>
          <button aria-label="暂停" disabled><svg class="ico"><use href="#v-pause"/></svg></button>
        </div>
        <div class="menu">
          <h3>菜单管理器</h3>
          <h4><i class="caret"></i>模具开模</h4>
          <ul>
            <li><button>定义步骤</button></li>
            <li><button>删除</button></li>
            <li><button>全部删除</button></li>
            <li><button>修改</button></li>
            <li><button>修改尺寸</button></li>
            <li><button>重新排序</button></li>
            <li><button>分解</button></li>
            <li><button class="done">完成/返回</button></li>
          </ul>
        </div>
      </section>
    </main>

    <!-- Status bar -->
    <footer class="status">
      <button class="toggle" aria-label="模型树"><svg class="ico"><use href="#t-tree"/></svg></button>
      <button aria-label="浏览器"><svg class="ico"><use href="#f-globe"/></svg></button>
      <button aria-label="全屏"><span class="square"></span></button>
      <p>装配元件已经成功分解。</p>
      <div class="find">
        <button aria-label="查找"><svg><use href="#f-find"/></svg></button>
        <button aria-label="查找选项" class="drop"><i class="caret"></i></button>
      </div>
      <div class="pick">
        <select aria-label="选择过滤器"><option>几何</option></select>
      </div>
    </footer>
  </div>
</div>

<!-- Windows taskbar -->
<div class="taskbar">
  <button class="task start"><svg><use href="#f-flag"/></svg>开始</button>
  <button class="task flat" aria-label="计算器"><svg><use href="#k-calc"/></svg><span class="calc-num">0</span></button>
  <button class="task" aria-label="微信"><svg><use href="#k-chat"/></svg></button>
  <button class="task" aria-label="格式工厂"><svg><use href="#k-red"/></svg></button>
  <button class="task t6"><b>T</b>6</button>
  <button class="task" aria-label="浏览器"><svg><use href="#k-browser"/></svg><span class="browser-e">e</span></button>
  <button class="task current" aria-label="Creo"><svg><use href="#k-creo"/></svg></button>
  <button class="task" aria-label="资源管理器"><svg><use href="#k-explorer"/></svg></button>
  <div class="lang">
    <svg class="ico"><use href="#k-kbd"/></svg>
    <span class="vsep"></span>
    <span class="round-help">?</span>
    <span class="vsep"></span>
    <svg class="restore"><use href="#k-restore"/></svg>
  </div>
  <div class="tray">
    <span class="chev"><svg viewBox="0 0 8 12"><path d="M1 5l3-3 3 3M1 10l3-3 3 3" fill="none" stroke="#000" stroke-width="1.500"/></svg></span>
    <svg class="ico"><use href="#k-qq"/></svg>
    <svg class="ico"><use href="#k-360"/></svg>
    <svg class="ico"><use href="#k-net"/></svg>
    <svg class="ico vol"><use href="#k-vol"/></svg>
    <div class="clock"><span>11:07 周三</span><span>2021/12/22</span></div>
    <span class="note"><svg><use href="#k-note"/></svg><em>2</em></span>
    <svg class="ico"><use href="#k-desk"/></svg>
  </div>
</div>

<!-- Forum watermark -->
<div class="watermark">
  <p class="wm-name"><b>野火</b>论坛</p>
  <p class="wm-url">www.proewildfire.cn</p>
  <svg class="flame" viewBox="0 0 20 42"><path d="M7 0c12 9 17 22 9 34-3 4-6 6-9 7-6-2-6-6-2-10 7-8 9-19 2-31zM2 9c5 5 7 11 5 18 3-7 2-13-5-18z" fill="#ff6a33"/></svg>
</div>
</body>
</html>
```

FILE: styles.css
```
* {
  box-sizing: border-box;
}
body {
  margin: 0;
  height: 100vh;
  display: flex;
  flex-direction: column;
  overflow: hidden;
  font-family: "Noto Sans CJK SC", sans-serif;
  font-size: 13px;
  line-height: 13px;
  color: #333;
}
h1, h2, h3, h4, p, ul {
  margin: 0;
  padding: 0;
  font-weight: normal;
  font-size: 13px;
}
ul {
  list-style: none;
}
button {
  border: 0;
  padding: 0;
  background: none;
  font: inherit;
  color: inherit;
  display: flex;
  align-items: center;
  justify-content: center;
}
svg {
  display: block;
  flex: none;
}
.sprite {
  position: absolute;
  width: 0;
  height: 0;
}
.ico {
  width: 17px;
  height: 17px;
}
.lat {
  font-family: "Liberation Mono", monospace;
  font-size: 12px;
  white-space: pre;
}
.caret {
  flex: none;
  border: 4px solid transparent;
  border-top-color: #555;
  border-bottom: 0;
  width: 8px;
  height: 4px;
}
.caret.dim {
  border-top-color: #aaa;
}
.caret.white {
  border-top-color: #fff;
}

/* Desktop and window */
.desktop {
  flex: 1;
  min-height: 0;
  display: flex;
  padding-right: 59px;
  background: linear-gradient(#0068a5, #0069a6 45%, #003c80);
}
.window {
  flex: 1;
  min-width: 0;
  display: flex;
  flex-direction: column;
  border: 4px solid #bababa;
  background: #fff;
}

/* Title bar */
.titlebar {
  display: grid;
  grid-template-columns: 1fr auto 1fr;
  align-items: center;
  height: 29px;
  background: #fbfbfb;
}
.titlebar h1 {
  font-size: 16px;
  line-height: 20px;
  color: #444;
}
.titlebar .lat {
  font-size: 13px;
}
.quick {
  display: flex;
  align-items: center;
  gap: 8px;
  padding-left: 12px;
}
.quick .logo {
  width: 18px;
  height: 18px;
}
.quick .caret {
  margin-right: -1px;
}
.brand {
  width: 46px;
  margin-left: -2px;
  padding-bottom: 3px;
  font-family: Lato, sans-serif;
  font-size: 20px;
  line-height: 24px;
  color: #666;
}
.sep {
  width: 1px;
  height: 25px;
  background: #bbb;
}
.quick .sep:last-of-type {
  margin: 0 -2px 0 -4px;
}
.customize {
  border-top: 2px solid #444;
  padding-top: 2px;
}
.winbtns {
  display: flex;
  justify-content: flex-end;
  gap: 17px;
  padding-right: 12px;
}
.winbtns svg {
  width: 12px;
  height: 12px;
}

/* Ribbon tabs */
.tabs {
  display: flex;
  height: 27px;
  padding-top: 2px;
  background: #3e4646;
}
.tab {
  min-width: 81px;
  padding: 0 25px 2px;
  font-size: 15px;
  color: #fff;
}
.tab.file {
  min-width: 74px;
  padding: 0 22px 2px;
  background: linear-gradient(#66d03e, #4fa535);
}
.tab.active {
  background: #fff;
  color: #3f7d20;
}
.tab-tools {
  display: flex;
  align-items: center;
  gap: 9px;
  margin-left: auto;
  padding: 0 4px 4px 0;
}
.tab-tools svg {
  width: 16px;
  height: 16px;
}
.help {
  width: 16px;
  height: 16px;
  border-radius: 8px;
  background: #2c3031;
  color: #fff;
  font-family: "Liberation Sans", sans-serif;
  font-weight: bold;
  font-size: 14px;
}

/* Ribbon */
.ribbon {
  display: flex;
  height: 104px;
  padding-top: 2px;
  border-bottom: 1px solid #a9b0b0;
  background: #fff;
}
.group {
  display: flex;
  flex-direction: column;
  flex: none;
  border-right: 1px solid #c5caca;
}
.group h2 {
  display: flex;
  align-items: center;
  justify-content: center;
  gap: 4px;
  height: 22px;
  padding-bottom: 2px;
}
.tools {
  display: grid;
  height: 79px;
}
.g-ops { width: 137px; }
.g-datum { width: 161px; }
.g-ref { width: 110px; }
.g-mod { width: 77px; }
.g-design { width: 131px; }
.g-part { width: 257px; }
.g-comp { width: 148px; }
.g-prod { width: 101px; }
.g-analysis { width: 131px; }
.g-goto { width: 50px; }
.g-ops .tools { grid-template-columns: 66px 1fr; }
.g-datum .tools { grid-template-columns: 48px 64px 1fr; }
.g-ref .tools { grid-template-columns: 66px 36px; }
.g-mod .tools { padding-left: 6px; }
.g-design .tools { grid-template-columns: 48px 1fr; }
.g-part .tools { grid-template-columns: 54px 40px 78px 1fr; }
.g-comp .tools { grid-template-columns: 66px 1fr; }
.g-prod .tools { padding-left: 6px; }
.g-analysis .tools { grid-template-columns: 43px 1fr; padding-left: 3px; gap: 3px; }
.big {
  flex-direction: column;
  justify-content: flex-start;
  padding-top: 3px;
  line-height: 13px;
  white-space: nowrap;
}
.big svg {
  width: 36px;
  height: 36px;
  margin-bottom: 8px;
}
.big .caret {
  margin-top: 4px;
}
.big.pressed {
  padding-top: 2px;
  border: 1px solid #a9adaf;
  background: #dfe0e2;
}
.col {
  margin-top: -1px;
}
.small {
  height: 26px;
  padding: 0 0 1px 1px;
  gap: 5px;
  white-space: nowrap;
}
.small .caret {
  margin-left: 2px;
}
.small:disabled {
  color: #aaa;
}

/* Work area */
.work {
  flex: 1;
  min-height: 0;
  display: flex;
  border-bottom: 2px solid #b4bfbf;
}
.panel {
  width: 312px;
  flex: none;
  display: flex;
  flex-direction: column;
  border-right: 3px solid #e6ecec;
}
.panel-tabs {
  display: flex;
  height: 32px;
  margin-right: -3px;
  background: #e6ecec;
}
.ptab {
  gap: 5px;
  padding: 0 8px 2px;
}
.ptab.active {
  justify-content: flex-start;
  gap: 7px;
  width: 81px;
  padding-left: 10px;
  background: #fff;
}
.ptab svg {
  width: 20px;
  height: 20px;
}
.ptab .t-tree {
  width: 17px;
}
.panel-head {
  display: flex;
  align-items: center;
  gap: 10px;
  height: 30px;
  padding: 0 9px 0 31px;
}
.panel-head h3 {
  flex: 1;
  padding-bottom: 3px;
  font-weight: bold;
}
.panel-head svg {
  width: 20px;
  height: 22px;
}
.panel-head .wide {
  width: 22px;
}
.filter {
  display: flex;
  align-items: center;
  padding: 0 12px;
}
.filter .caret {
  margin: 0 12px 0 5px;
}
.filter label {
  margin-right: 4px;
}
.filter-box {
  flex: 1;
  display: flex;
  height: 25px;
  border: 1px solid #a9b7b7;
}
.filter-box input {
  flex: 1;
  min-width: 0;
  border: 0;
  outline: 0;
}
.filter-box button {
  width: 18px;
}
.filter-box svg {
  width: 9px;
  height: 9px;
}
.plus svg {
  width: 12px;
  height: 12px;
}
.tree {
  flex: 1;
  min-height: 0;
  margin: 5px 5px 0 8px;
  overflow: hidden;
  background: #fdfdfd;
}
.tree li {
  display: flex;
  align-items: center;
  height: 20px;
  padding-left: 24px;
  white-space: nowrap;
}
.tree .name {
  line-height: 18px;
  padding-bottom: 2px;
}
.tree .ico {
  margin-right: 5px;
}
.tree .root {
  padding-left: 4px;
}
.tree .root .ico {
  margin-right: 4px;
}
.tree .off {
  color: #bbb;
}
.node::before {
  content: "";
  width: 0;
  margin-left: -16px;
  margin-right: 8px;
  border: 5px solid transparent;
  border-left: 8px solid #888;
  border-right: 0;
}
.tree .insert-line {
  height: 3px;
  margin-top: 6px;
  background: #62c740;
}
.hscroll {
  display: flex;
  height: 16px;
  margin: 0 5px 5px 8px;
}
.hscroll button {
  width: 16px;
  border: 1px solid #ccc;
  background: #fafafa;
}
.arrow {
  border: 4px solid transparent;
}
.arrow.left {
  border-right-color: #888;
  border-left: 0;
}
.arrow.right {
  border-left-color: #888;
  border-right: 0;
}
.track {
  flex: 1;
  background: #dfe0e2;
}
.thumb {
  width: 79%;
  height: 100%;
  border: 1px solid #bbb;
  background: #f7f7f7;
}

/* Graphics area */
.viewport {
  position: relative;
  flex: 1;
  min-width: 0;
  background: #f8fafc;
}
.scene {
  position: absolute;
  width: 100%;
  height: 100%;
}
.state {
  font-family: "Open Sans", "Noto Sans CJK SC", sans-serif;
  font-size: 13px;
  font-weight: 300;
  fill: #555;
}
.viewbar {
  position: relative;
  display: flex;
  justify-content: space-between;
  width: 415px;
  margin: 7px auto 0;
  padding: 3px 2px 5px;
  border: 1px solid #aebaba;
  background: #fff;
}
.viewbar button {
  position: relative;
  width: 26px;
  height: 24px;
}
.viewbar .on {
  border: 1px solid #a9adaf;
  background: #dfe0e2;
}
.more::after {
  content: "";
  position: absolute;
  right: 2px;
  bottom: 0;
  border: 2px solid #555;
  border-top-color: transparent;
  border-left-color: transparent;
}
.menu {
  position: absolute;
  top: 0;
  right: 0;
  width: 106px;
  padding: 1px 1px 2px;
  background: #fff;
}
.menu h3 {
  padding: 7px 0;
  font-size: 14px;
  font-weight: bold;
  text-align: center;
  color: #999;
  background: #e6e8ea;
}
.menu h4 {
  display: flex;
  align-items: center;
  gap: 10px;
  height: 22px;
  padding: 0 0 2px 4px;
  border-bottom: 1px solid #a5a9ac;
  background: #c4c9cc;
  color: #111;
}
.menu .caret {
  width: 12px;
  height: 7px;
  border-width: 7px 6px 0;
  border-top-color: #222;
}
.menu ul {
  border-left: 1px solid #aaa;
  border-bottom: 1px solid #aaa;
}
.menu li button {
  width: 100%;
  height: 21px;
  padding: 0 0 2px 22px;
  justify-content: flex-start;
  color: #555;
}
.menu li .done {
  font-weight: bold;
}

/* Status bar */
.status {
  display: flex;
  align-items: center;
  height: 34px;
  padding: 0 19px 0 6px;
  font-size: 12px;
  gap: 7px;
}
.status .toggle {
  width: 23px;
  height: 23px;
  border: 1px solid #aaa;
  background: #dfe0e2;
}
.square {
  width: 17px;
  height: 17px;
  margin-left: 3px;
  border: 1px solid #2c6f92;
  background: linear-gradient(#fff, #cfe2ee);
}
.status p {
  flex: 1;
  display: flex;
  align-items: center;
  gap: 4px;
  margin-left: 5px;
  padding: 0 0 2px 6px;
  height: 23px;
  border-left: 1px solid #ccc;
  font-size: 12px;
}
.status p::before {
  content: "";
  width: 6px;
  height: 6px;
  border-radius: 3px;
  background: #15608a;
}
.find {
  display: flex;
  height: 26px;
  padding: 0 2px;
  border: 1px solid #ccc;
  border-width: 0 1px;
}
.find button {
  width: 29px;
  border: 1px solid #bbb;
  background: #fafafa;
}
.find .drop {
  width: 16px;
  border-left: 0;
}
.find svg {
  width: 18px;
  height: 18px;
}
.pick {
  position: relative;
  margin-left: 76px;
}
.pick::after {
  content: "";
  position: absolute;
  right: 4px;
  top: 9px;
  border: 4px solid transparent;
  border-top-color: #555;
  border-bottom: 0;
}
.pick select {
  appearance: none;
  display: block;
  width: 154px;
  height: 21px;
  padding: 0 8px;
  border: 1px solid #aaa;
  border-radius: 0;
  background: linear-gradient(#bbb, #bbb) right 15px top / 1px 100% no-repeat #f7f7f7;
  font: inherit;
  font-size: 12px;
  color: #333;
}

/* Taskbar */
.taskbar {
  display: flex;
  gap: 2px;
  height: 47px;
  padding: 3px 2px 2px;
  border-top: 1px solid #fff;
  background: #d4d0c8;
  color: #000;
}
.task {
  position: relative;
  width: 51px;
  height: 41px;
  border: 1px solid #404040;
  border-top-color: #fff;
  border-left-color: #fff;
  box-shadow: inset -1px -1px #808080;
}
.task svg {
  width: 36px;
  height: 36px;
}
.task.start {
  width: 49px;
  margin-right: 6px;
  padding-bottom: 2px;
  gap: 1px;
  font-size: 12px;
}
.task.start svg {
  width: 18px;
  height: 18px;
}
.task.flat {
  border-color: transparent;
  box-shadow: none;
}
.task.current {
  border-color: #404040 #fff #fff #404040;
  box-shadow: inset 1px 1px #808080;
  background: #fff;
}
.calc-num {
  position: absolute;
  right: 15px;
  top: 6px;
  font-size: 9px;
  line-height: 10px;
  color: #2c4a70;
}
.browser-e {
  position: absolute;
  left: 15px;
  top: 5px;
  font-family: Lato, sans-serif;
  font-weight: 900;
  font-size: 34px;
  line-height: 28px;
  color: #fff;
}
.t6 {
  font-family: "Liberation Sans", sans-serif;
  font-weight: bold;
  font-size: 28px;
}
.t6 b {
  color: #e8140c;
}
.lang {
  display: flex;
  align-items: center;
  gap: 5px;
  margin-left: auto;
}
.vsep {
  width: 2px;
  height: 22px;
  border-left: 1px solid #808080;
  border-right: 1px solid #fff;
}
.round-help {
  width: 16px;
  height: 16px;
  border-radius: 8px;
  background: #1032b0;
  color: #fff;
  font-weight: bold;
  line-height: 16px;
  text-align: center;
}
.restore {
  width: 10px;
  height: 17px;
  margin-bottom: 5px;
}
.tray {
  display: flex;
  align-items: center;
  width: 263px;
  padding: 0 1px 0 3px;
  gap: 7px;
  border: 1px solid #fff;
  border-top-color: #808080;
  border-left-color: #808080;
}
.chev svg {
  width: 8px;
  height: 12px;
}
.chev {
  margin-right: 3px;
}
.tray .vol {
  width: 12px;
}
.clock {
  display: flex;
  flex-direction: column;
  align-items: center;
  width: 80px;
  margin-left: 8px;
  font-family: "Liberation Mono", "Noto Sans CJK SC", monospace;
  font-size: 12px;
  line-height: 13px;
}
.note {
  position: relative;
  margin: 0 2px;
}
.note svg {
  width: 22px;
  height: 20px;
}
.note em {
  position: absolute;
  right: -7px;
  bottom: -8px;
  width: 15px;
  height: 15px;
  background: #d81118;
  color: #fff;
  font-style: normal;
  font-size: 10px;
  line-height: 15px;
  text-align: center;
}

/* Watermark */
.watermark {
  position: fixed;
  right: 19px;
  bottom: 7px;
  width: 168px;
  pointer-events: none;
}
.wm-name {
  font-size: 40px;
  line-height: 42px;
  font-style: italic;
  font-weight: 300;
  white-space: nowrap;
  color: #000;
}
.wm-name b {
  font-weight: 300;
  margin-right: 4px;
  color: #ff6a33;
}
.wm-url {
  font-family: "Open Sans", sans-serif;
  font-size: 16px;
  line-height: 20px;
  font-weight: bold;
  font-style: italic;
  text-align: center;
  color: #888;
  opacity: .7;
}
.flame {
  position: absolute;
  left: 62px;
  top: -12px;
  width: 20px;
  height: 42px;
}
```
